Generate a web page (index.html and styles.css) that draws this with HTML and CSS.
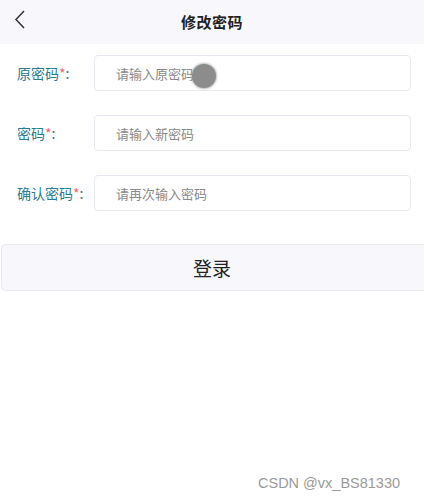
FILE: index.html
```html
<!DOCTYPE html>
<html lang="zh">
<head>
<meta charset="utf-8">
<link rel="stylesheet" href="styles.css">
</head>
<body>
<div class="page">
  <header class="nav">
    <svg class="back" width="14" height="22" viewBox="0 0 14 22"><polyline points="11,2 3,10.5 11,19" fill="none" stroke="#333" stroke-width="1.5"/></svg>
    <h1 class="title">修改密码</h1>
  </header>
  <form class="form">
    <div class="row">
      <label class="label">原密码<span class="star">*</span>:</label>
      <div class="input">请输入原密码</div>
    </div>
    <div class="row">
      <label class="label">密码<span class="star">*</span>:</label>
      <div class="input">请输入新密码</div>
    </div>
    <div class="row">
      <label class="label">确认密码<span class="star">*</span>:</label>
      <div class="input">请再次输入密码</div>
    </div>
  </form>
  <div class="btn">登录</div>
  <div class="touch"></div>
  <div class="mark">CSDN @vx_BS81330</div>
</div>
</body>
</html>
```
FILE: styles.css
```css
* { box-sizing: border-box; }
html, body { margin: 0; padding: 0; background: #fff; }
body { font-family: "Noto Sans CJK SC", "Noto Sans", sans-serif; width: 424px; height: 499px; overflow: hidden; }
.page { position: relative; width: 424px; height: 499px; }
.nav { height: 44px; background: #f7f7fc; display: flex; align-items: center; justify-content: center; position: relative; }
.back { position: absolute; left: 13px; top: 9px; }
.title { margin: 0 0 2px; font-size: 15px; font-weight: 700; color: #222; letter-spacing: 0.5px; }
.form { padding: 11px 13px 0 17px; display: flex; flex-direction: column; gap: 24px; }
.row { display: flex; align-items: center; height: 36px; }
.label { width: 77px; font-size: 14px; color: #2b7a8f; }
.star { color: #e06a6a; }
.input { flex: 1; height: 36px; border: 1px solid #e8e8f2; border-radius: 4px; padding-left: 21px; display: flex; align-items: center; font-size: 13px; color: #8a8a8a; background: #fff; }
.btn { margin: 33px 0 0 1px; height: 47px; background: #f7f7fc; border: 1px solid #e8e8f0; border-right: none; border-radius: 5px 0 0 5px; display: flex; align-items: center; justify-content: center; font-size: 19px; color: #222; padding-right: 2px; }
.touch { position: absolute; left: 192px; top: 64px; width: 24px; height: 24px; border-radius: 50%; background: #8c8c8c; box-shadow: 0 0 2px 1px rgba(140,140,140,0.6); }
.mark { position: absolute; left: 258px; top: 475px; font-family: "Liberation Sans", Arial, sans-serif; font-size: 14.5px; color: #9a9a9a; }
```
